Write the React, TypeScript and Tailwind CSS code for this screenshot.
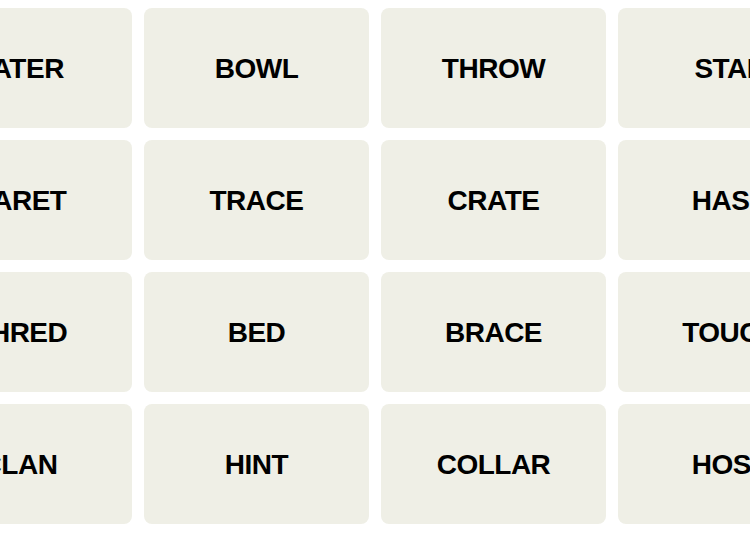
const WORDS: string[][] = [
  ['LATER', 'BOWL', 'THROW', 'STAR'],
  ['CARET', 'TRACE', 'CRATE', 'HASH'],
  ['SHRED', 'BED', 'BRACE', 'TOUCH'],
  ['CLAN', 'HINT', 'COLLAR', 'HOSE'],
];

export default function App() {
  return (
    <div className="w-[750px] h-[533px] overflow-hidden bg-white">
      {/* board is wider than the viewport; shift left so column 2 sits at x=144 */}
      <div className="ml-[-93px] pt-2 grid grid-cols-[repeat(4,225px)] grid-rows-[repeat(4,120px)] gap-x-[12px] gap-y-[12px] w-max">
        {WORDS.flat().map((w, i) => (
          <div
            key={i}
            className="flex items-center justify-center pt-[2px] rounded-lg bg-[#efefe6] text-black font-bold uppercase text-[28px] tracking-[-0.5px] leading-none"
            style={{ fontFamily: '"Liberation Sans", Arial, sans-serif' }}
          >
            {w}
          </div>
        ))}
      </div>
    </div>
  );
}
